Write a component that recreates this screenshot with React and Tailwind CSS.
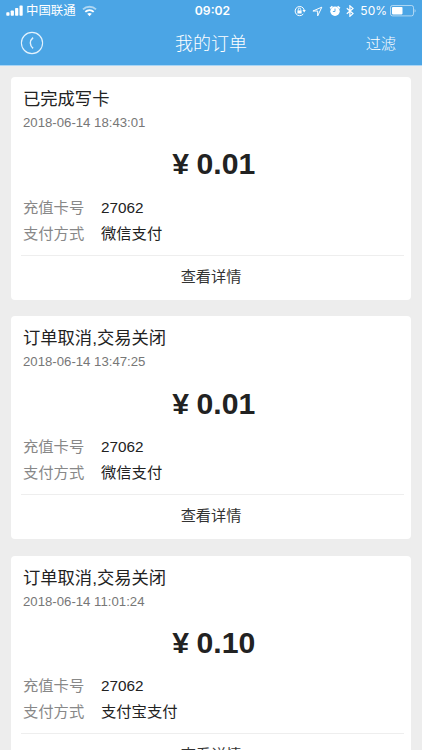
import React from "react";

const orders = [
  { id: 1, status: "已完成写卡", time: "2018-06-14 18:43:01", amount: "0.01", card: "27062", pay: "微信支付" },
  { id: 2, status: "订单取消,交易关闭", time: "2018-06-14 13:47:25", amount: "0.01", card: "27062", pay: "微信支付" },
  { id: 3, status: "订单取消,交易关闭", time: "2018-06-14 11:01:24", amount: "0.10", card: "27062", pay: "支付宝支付" },
];

function StatusBar() {
  return (
    <div className="grid h-[22px] grid-cols-[1fr_auto_1fr] items-center pl-[6px] pr-[6px]">
      <div className="flex items-center">
        <svg width="17" height="12" viewBox="0 0 17 12" fill="#fff">
          <rect x="0.3" y="7.3" width="3.2" height="3.5" rx="0.7" />
          <rect x="4.7" y="5.6" width="3.2" height="5.2" rx="0.7" />
          <rect x="9.1" y="3.1" width="3.2" height="7.7" rx="0.7" />
          <rect x="13.5" y="0.4" width="3.2" height="10.4" rx="0.7" />
        </svg>
        <span className="ml-[3px] text-[12.4px] leading-[22px]">中国联通</span>
        <svg className="ml-[6px]" width="15" height="12" viewBox="0 0 15 12" fill="none" stroke="#fff" strokeWidth="1.9">
          <path d="M1 4.4C4.6.9 10.4.9 14 4.4" opacity="0.55" />
          <path d="M3.3 6.9c2.4-2.2 6-2.2 8.4 0" />
          <path d="M5.2 8.8c1.3-1.2 3.3-1.2 4.6 0L7.5 11.2z" fill="#fff" stroke="none" />
        </svg>
      </div>
      <span className="ml-[3px] font-[Inter] text-[12.2px] font-semibold leading-[22px]">09:02</span>
      <div className="flex items-center justify-end">
        {/* rotation lock */}
        <svg width="12" height="12" viewBox="0 0 12 12" fill="none" stroke="#fff" strokeWidth="1">
          <path d="M9.3 9A4.6 4.6 0 1 1 10.2 5" />
          <path d="M8.4 5h3.4l-1.6 2.4z" fill="#fff" stroke="none" />
          <rect x="3.4" y="5.4" width="4.2" height="3.1" fill="#fff" stroke="none" />
          <path d="M4.3 5.5V4.3a1.2 1.2 0 0 1 2.4 0v1.2" strokeWidth="0.9" />
        </svg>
        <svg className="ml-[6px]" width="11" height="11" viewBox="0 0 11 11" fill="none" stroke="#fff" strokeWidth="1" strokeLinejoin="round">
          <path d="M9.8 1.2.9 5h4.8v4.9z" />
        </svg>
        <svg className="ml-[6px]" width="12" height="12" viewBox="0 0 12 12">
          <circle cx="6" cy="6.3" r="4.7" fill="#fff" />
          <path d="M1.1 3.4 3.4 1.2M10.9 3.4 8.6 1.2" stroke="#fff" strokeWidth="1.5" />
          <path d="M6 3.6v2.9H3.9" fill="none" stroke="#4ba5e5" strokeWidth="0.9" />
        </svg>
        <svg className="ml-[5px]" width="8" height="12" viewBox="0 0 8 12" fill="none" stroke="#fff" strokeWidth="1.2">
          <path d="m.8 3.2 6.2 5.4-3.1 2.7V.8L7 3.4.8 8.8" />
        </svg>
        <span className="ml-[6px] font-[Inter] text-[12px] leading-[22px]">50%</span>
        <svg className="ml-[3px]" width="26" height="12" viewBox="0 0 26 12">
          <rect x="0.5" y="0.5" width="23" height="10.4" rx="2" fill="none" stroke="#fff" strokeOpacity="0.55" />
          <rect x="2" y="2" width="10.5" height="7.4" rx="0.8" fill="#fff" />
          <path d="M24.6 4v3.6c1.3-.5 1.3-3.1 0-3.6z" fill="#fff" fillOpacity="0.6" />
        </svg>
      </div>
    </div>
  );
}

function Header() {
  return (
    <header className="h-[66px] shrink-0 border-b border-[#a9d5f5] bg-[#4ba5e5] text-white">
      <StatusBar />
      <div className="grid h-[42px] grid-cols-[1fr_auto_1fr] items-center pl-5 pr-[26px]">
        <button className="flex">
          <svg width="24" height="24" viewBox="0 0 24 24" fill="none" stroke="#e3f2fd">
            <circle cx="12" cy="12" r="10.6" strokeWidth="1.1" />
            <path d="M13.1 6.6c-3.7 3.1-3.7 7.7 0 10.8" strokeWidth="1.4" />
          </svg>
        </button>
        <h1 className="ml-[6px] pt-px text-[18px] font-light leading-6">我的订单</h1>
        <button className="pt-px text-right text-[15.2px] font-light leading-6">过滤</button>
      </div>
    </header>
  );
}

function OrderCard({ order }) {
  return (
    <div className="h-[222.9px] shrink-0 rounded-[4px] bg-white px-[10px]">
      <div className="h-[177.5px] px-[2px] pt-[10px]">
        <p className="text-[17.3px] leading-6 text-[#222]">{order.status}</p>
        <p className="mt-px text-[13.2px] leading-[22px] text-[#777]">{order.time}</p>
        <p className="mt-[10px] flex h-10 items-center justify-center gap-[7.5px] pl-[5.5px] text-[30.2px] font-bold text-[#222]">
          <span>¥</span>
          <span>{order.amount}</span>
        </p>
        <div className="mt-[10.6px] flex text-[15.3px] leading-[26px]">
          <span className="w-[78px] text-[#888]">充值卡号</span>
          <span className="text-[#222]">{order.card}</span>
        </div>
        <div className="flex text-[15.3px] leading-[26px]">
          <span className="w-[78px] text-[#888]">支付方式</span>
          <span className="text-[#222]">{order.pay}</span>
        </div>
      </div>
      <button className="-mr-[3px] block h-[45px] w-[383px] border-t border-[#eee] pb-[2px] text-[15.2px] leading-[42px] text-[#333]">
        <span className="pr-[3px]">查看详情</span>
      </button>
    </div>
  );
}

export default function App() {
  return (
    <div className="flex h-[750px] w-full flex-col overflow-hidden bg-[#ededed] font-['Liberation_Sans','Noto_Sans_CJK_SC',sans-serif]">
      <Header />
      <div className="flex flex-1 flex-col gap-[16.4px] overflow-hidden px-[11px] pt-[11px]">
        {orders.map((order) => (
          <OrderCard key={order.id} order={order} />
        ))}
      </div>
    </div>
  );
}
